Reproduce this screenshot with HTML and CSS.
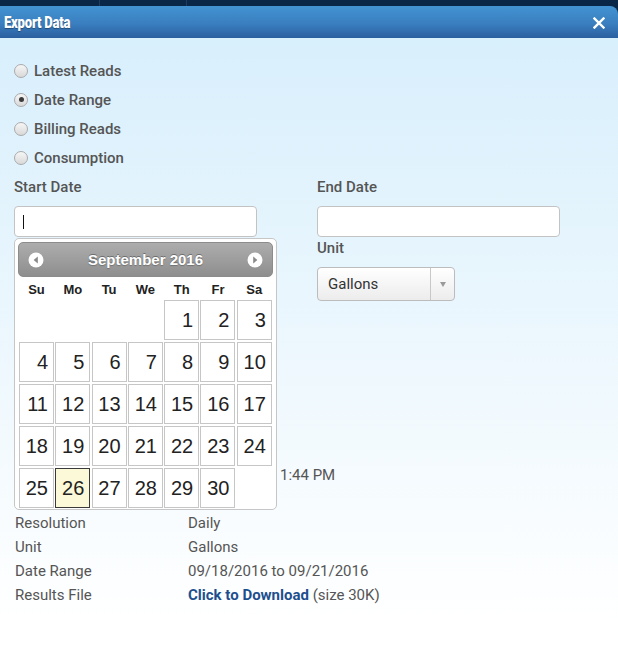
FILE: index.html
```html
<!DOCTYPE html>
<html>
<head>
<meta charset="utf-8">
<link rel="stylesheet" href="styles.css">
</head>
<body>
<div class="topbar"><span class="seg seg1"></span><span class="seg seg2"></span><span class="seg seg3"></span></div>
<div class="dialog">
  <div class="titlebar">
    <span class="title">Export Data</span>
    <svg class="close" width="12" height="12" viewBox="0 0 12 12"><path d="M1.5 1.5 L10.5 10.5 M10.5 1.5 L1.5 10.5" stroke="#fff" stroke-width="2.4" stroke-linecap="square"/></svg>
  </div>
  <div class="content">
    <div class="radios">
      <div class="radio"><span class="circle"></span>Latest Reads</div>
      <div class="radio"><span class="circle checked"></span>Date Range</div>
      <div class="radio"><span class="circle"></span>Billing Reads</div>
      <div class="radio"><span class="circle"></span>Consumption</div>
    </div>
    <div class="form">
      <div class="col col-left">
        <div class="label">Start Date</div>
        <div class="input"><span class="caret"></span></div>
        <div class="datepicker">
          <div class="dp-header">
            <svg class="dp-nav" width="16" height="16" viewBox="0 0 16 16"><circle cx="8" cy="8" r="7.5" fill="#fff"/><path d="M9.8 4.6 L5.6 8 L9.8 11.4 Z" fill="#8a8a8a"/></svg>
            <span class="dp-title">September 2016</span>
            <svg class="dp-nav" width="16" height="16" viewBox="0 0 16 16"><circle cx="8" cy="8" r="7.5" fill="#fff"/><path d="M6.2 4.6 L10.4 8 L6.2 11.4 Z" fill="#8a8a8a"/></svg>
          </div>
          <div class="dp-days">
            <span>Su</span><span>Mo</span><span>Tu</span><span>We</span><span>Th</span><span>Fr</span><span>Sa</span>
          </div>
          <div class="dp-grid">
            <span class="empty"></span><span class="empty"></span><span class="empty"></span><span class="empty"></span>
            <span class="day">1</span><span class="day">2</span><span class="day">3</span>
            <span class="day">4</span><span class="day">5</span><span class="day">6</span><span class="day">7</span><span class="day">8</span><span class="day">9</span><span class="day">10</span>
            <span class="day">11</span><span class="day">12</span><span class="day">13</span><span class="day">14</span><span class="day">15</span><span class="day">16</span><span class="day">17</span>
            <span class="day">18</span><span class="day">19</span><span class="day">20</span><span class="day">21</span><span class="day">22</span><span class="day">23</span><span class="day">24</span>
            <span class="day">25</span><span class="day today">26</span><span class="day">27</span><span class="day">28</span><span class="day">29</span><span class="day">30</span><span class="empty"></span>
          </div>
        </div>
      </div>
      <div class="col">
        <div class="label">End Date</div>
        <div class="input"></div>
        <div class="label label-unit">Unit</div>
        <div class="select"><span class="select-text">Gallons</span><span class="select-btn"><span class="arrow"></span></span></div>
      </div>
    </div>
    <div class="info">
      <div class="row row-time"><span class="val">1:44 PM</span></div>
      <div class="row"></div>
      <div class="row"><span class="key">Resolution</span><span class="val">Daily</span></div>
      <div class="row"><span class="key">Unit</span><span class="val">Gallons</span></div>
      <div class="row"><span class="key">Date Range</span><span class="val">09/18/2016 to 09/21/2016</span></div>
      <div class="row"><span class="key">Results File</span><span class="val"><a class="link">Click to Download</a> (size 30K)</span></div>
    </div>
  </div>
</div>
</body>
</html>
```

FILE: styles.css
```css
html, body {
  margin: 0;
  padding: 0;
  background: #ffffff;
}
body {
  font-family: Roboto, "Liberation Sans", sans-serif;
  color: #555;
  width: 618px;
  height: 648px;
  overflow: hidden;
}
.topbar {
  height: 6px;
  background: #0a2747;
  display: flex;
}
.seg {
  height: 6px;
}
.seg1 { width: 99px; border-right: 1px solid #1d3d63; }
.seg2 { width: 86px; border-right: 1px solid #1d3d63; }
.seg3 { flex: 1; }
.dialog {
  background: #0a2747;
}
.titlebar {
  height: 32px;
  background: linear-gradient(#4393d2, #3a7fc0 55%, #2a5f9f);
  border-top-right-radius: 8px;
  display: flex;
  align-items: center;
  justify-content: space-between;
  padding: 0 13px 0 4px;
}
.title {
  display: inline-block;
  color: #fff;
  font-weight: 900;
  font-size: 16px;
  letter-spacing: -0.3px;
  transform: scaleX(0.82);
  transform-origin: left center;
  text-shadow: 0 1px 1px rgba(0, 0, 0, 0.35);
}
.close {
  display: block;
  margin-top: 1px;
}
.content {
  height: 610px;
  background: linear-gradient(#d8effc, #ffffff 96%);
  padding: 18px 14px 0 14px;
  box-sizing: border-box;
}
.radios {
  display: flex;
  flex-direction: column;
}
.radio {
  height: 29px;
  display: flex;
  align-items: center;
  font-size: 15px;
  font-weight: 500;
  color: #555;
}
.circle {
  width: 12px;
  height: 12px;
  border-radius: 50%;
  border: 1px solid #aaa;
  background: linear-gradient(#f6f6f6, #d9d9d9);
  margin-right: 6px;
  display: flex;
  align-items: center;
  justify-content: center;
}
.circle.checked::after {
  content: "";
  width: 5px;
  height: 5px;
  border-radius: 50%;
  background: #3a3a3a;
}
.form {
  display: flex;
  gap: 60px;
  margin-top: 5px;
}
.col {
  width: 243px;
  display: flex;
  flex-direction: column;
}
.col-left {
  position: relative;
}
.label {
  height: 20px;
  line-height: 20px;
  font-size: 15px;
  font-weight: 500;
  color: #555;
}
.label-unit {
  margin-top: 1px;
}
.input {
  margin-top: 9px;
  height: 31px;
  box-sizing: border-box;
  border: 1px solid #c3c3c3;
  border-radius: 4px;
  background: #fff;
  display: flex;
  align-items: center;
  padding-left: 8px;
}
.caret {
  width: 1px;
  height: 14px;
  background: #111;
}
.select {
  margin-top: 9px;
  width: 138px;
  height: 34px;
  box-sizing: border-box;
  border: 1px solid #bcbcbc;
  border-radius: 4px;
  background: linear-gradient(#ffffff, #ececec);
  display: flex;
  align-items: stretch;
}
.select-text {
  flex: 1;
  display: flex;
  align-items: center;
  padding-left: 10px;
  font-size: 15px;
  color: #333;
}
.select-btn {
  width: 23px;
  border-left: 1px solid #c8c8c8;
  display: flex;
  align-items: center;
  justify-content: center;
}
.arrow {
  width: 0;
  height: 0;
  border-left: 3.5px solid transparent;
  border-right: 3.5px solid transparent;
  border-top: 5px solid #9a9a9a;
  margin-top: 1px;
}
.datepicker {
  position: absolute;
  left: 0;
  top: 61px;
  width: 263px;
  box-sizing: border-box;
  background: #fff;
  border: 1px solid #c6c6c6;
  border-radius: 5px;
  padding: 3px 3px 1px 3px;
  z-index: 5;
  font-family: "Liberation Sans", Arial, sans-serif;
}
.dp-header {
  height: 35px;
  box-sizing: border-box;
  border: 1px solid #8c8c8c;
  border-radius: 5px;
  background: linear-gradient(#adadad, #8e8e8e);
  display: flex;
  align-items: center;
  justify-content: space-between;
  padding: 0 9px 0 9px;
}
.dp-nav {
  display: block;
}
.dp-title {
  color: #fff;
  font-weight: 700;
  font-size: 15px;
  text-shadow: 0 -1px 0 #6e6e6e, 0 1px 1px rgba(0,0,0,0.25);
}
.dp-days {
  height: 23px;
  display: grid;
  grid-template-columns: repeat(7, 35px);
  column-gap: 1.3px;
  padding-left: 1px;
  align-items: center;
}
.dp-days span {
  text-align: center;
  font-weight: 700;
  font-size: 13px;
  color: #222;
  padding-top: 2px;
}
.dp-grid {
  display: grid;
  grid-template-columns: repeat(7, 35px);
  grid-auto-rows: 40px;
  column-gap: 1.3px;
  row-gap: 2px;
  padding-left: 1px;
}
.day {
  box-sizing: border-box;
  border: 1px solid #c6c6c6;
  background: #fff;
  text-align: right;
  padding-right: 5px;
  font-size: 20px;
  line-height: 38px;
  color: #222;
}
.day.today {
  background: #fcf9d9;
  border-color: #3a3a3a;
}
.info {
  margin-top: 162px;
  display: flex;
  flex-direction: column;
}
.row {
  height: 24px;
  display: flex;
  align-items: center;
  font-size: 15px;
  color: #555;
  padding-left: 1px;
}
.row-time {
  padding-left: 266px;
}
.key {
  width: 173px;
}
.val {
  color: #555;
}
.link {
  color: #1d4f8e;
  font-weight: 700;
}
```
